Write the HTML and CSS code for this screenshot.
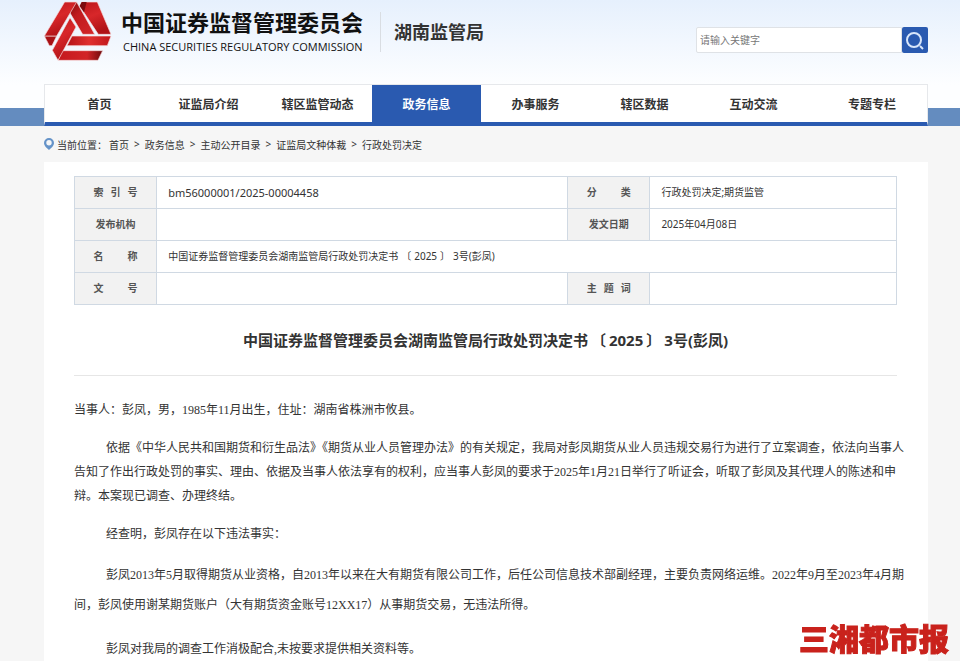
FILE: index.html
```html
<!DOCTYPE html>
<html lang="zh-CN">
<head>
<meta charset="utf-8">
<meta name="viewport" content="width=device-width, initial-scale=1">
<title>中国证券监督管理委员会湖南监管局行政处罚决定书</title>
<link rel="stylesheet" href="styles.css">
</head>
<body>
<header class="header">
  <div class="brand-row">
    <a class="brand" href="#">
      <svg class="logo" viewBox="0 0 216 192" aria-hidden="true">
        <defs>
          <linearGradient id="down" x1="0" y1="0" x2="0.4" y2="1">
            <stop offset="0" stop-color="#b81519"/><stop offset="0.5" stop-color="#d8272a"/><stop offset="1" stop-color="#b01216"/>
          </linearGradient>
          <linearGradient id="fold" x1="0" y1="0" x2="1" y2="1">
            <stop offset="0" stop-color="#6e0a0c"/><stop offset="0.4" stop-color="#c01a1d"/><stop offset="1" stop-color="#d4272a"/>
          </linearGradient>
          <linearGradient id="bar" x1="0" y1="0" x2="1" y2="0">
            <stop offset="0" stop-color="#b51418"/><stop offset="0.5" stop-color="#e0302f"/><stop offset="1" stop-color="#c0171b"/>
          </linearGradient>
          <linearGradient id="base" x1="0" y1="0" x2="1" y2="0">
            <stop offset="0" stop-color="#c5191d"/><stop offset="0.65" stop-color="#d22427"/><stop offset="1" stop-color="#6e0a0c"/>
          </linearGradient>
        </defs>
        <g stroke="#f6dedf" stroke-width="2" stroke-linejoin="round">
          <polygon points="68,6 104,6 158,103 122,103 68,12" fill="url(#fold)"/>
          <polygon points="7,108 44,108 30,137 22,137" fill="#a81115"/>
          <polygon points="68,6 104,6 44,108 7,108" fill="url(#down)"/>
          <polygon points="119,6 166,6 207,103 169,103 113,18" fill="url(#down)"/>
          <polygon points="113,18 119,6 134,6 126,37" fill="#7c0b0e" stroke="none"/>
          <polygon points="60,152 182,152 168,181 48,181" fill="url(#base)"/>
          <polygon points="84,53 102,81 48,181 31,151" fill="url(#down)"/>
          <polygon points="90,108 207,108 196,137 75,137" fill="url(#bar)"/>
        </g>
      </svg>
      <span class="brand-text">
        <span class="brand-cn">中国证券监督管理委员会</span>
        <span class="brand-en">CHINA SECURITIES REGULATORY COMMISSION</span>
      </span>
      <span class="bureau">湖南监管局</span>
    </a>
    <form class="search" role="search">
      <input class="search-input" type="text" placeholder="请输入关键字" aria-label="请输入关键字">
      <button class="search-button" type="button" aria-label="搜索">
        <svg viewBox="0 0 26 26" aria-hidden="true"><circle cx="12" cy="13" r="7"/><path d="M18 19l3 3"/></svg>
      </button>
    </form>
  </div>
  <nav class="nav">
    <a href="#">首页</a>
    <a href="#">证监局介绍</a>
    <a href="#">辖区监管动态</a>
    <a class="active" href="#">政务信息</a>
    <a href="#">办事服务</a>
    <a href="#">辖区数据</a>
    <a href="#">互动交流</a>
    <a href="#">专题专栏</a>
  </nav>
</header>
<main class="main">
  <div class="crumbs">
    <svg class="pin" viewBox="0 0 10 12" aria-hidden="true"><path fill-rule="evenodd" d="M5 0a5 5 0 0 1 5 5c0 3-3 5-5 7C3 10 0 8 0 5a5 5 0 0 1 5-5zM5 2a2.700 2.700 0 1 0 0 5.400A2.700 2.700 0 0 0 5 2z"/></svg>
    <span class="here">当前位置：</span>
    <a href="#">首页</a><span>&gt;</span>
    <a href="#">政务信息</a><span>&gt;</span>
    <a href="#">主动公开目录</a><span>&gt;</span>
    <a href="#">证监局文种体裁</a><span>&gt;</span>
    <a href="#">行政处罚决定</a>
  </div>
  <article class="panel">
    <table class="meta">
      <colgroup><col class="col-label"><col class="col-wide"><col class="col-label"><col class="col-rest"></colgroup>
      <tbody>
        <tr><th scope="row"><span class="spread">索引号</span></th><td class="code">bm56000001/2025-00004458</td><th scope="row"><span class="spread">分类</span></th><td>行政处罚决定;期货监管</td></tr>
        <tr><th scope="row">发布机构</th><td></td><th scope="row">发文日期</th><td>2025年04月08日</td></tr>
        <tr><th scope="row"><span class="spread">名称</span></th><td colspan="3">中国证券监督管理委员会湖南监管局行政处罚决定书<span class="bracket">〔</span>2025<span class="bracket">〕</span>3号(彭凤)</td></tr>
        <tr><th scope="row"><span class="spread">文号</span></th><td></td><th scope="row"><span class="spread">主题词</span></th><td></td></tr>
      </tbody>
    </table>
    <h1 class="title">中国证券监督管理委员会湖南监管局行政处罚决定书<span class="bracket">〔</span>2025<span class="bracket">〕</span>3号(彭凤)</h1>
    <div class="body">
      <p class="party">当事人：彭凤，男，1985年11月出生，住址：湖南省株洲市攸县。</p>
      <p>依据《中华人民共和国期货和衍生品法》《期货从业人员管理办法》的有关规定，我局对彭凤期货从业人员违规交易行为进行了立案调查，依法向当事人告知了作出行政处罚的事实、理由、依据及当事人依法享有的权利，应当事人彭凤的要求于2025年1月21日举行了听证会，听取了彭凤及其代理人的陈述和申辩。本案现已调查、办理终结。</p>
      <p>经查明，彭凤存在以下违法事实：</p>
      <p class="loose">彭凤2013年5月取得期货从业资格，自2013年以来在大有期货有限公司工作，后任公司信息技术部副经理，主要负责网络运维。2022年9月至2023年4月期间，彭凤使用谢某期货账户（大有期货资金账号12XX17）从事期货交易，无违法所得。</p>
      <p class="loose">彭凤对我局的调查工作消极配合,未按要求提供相关资料等。</p>
    </div>
  </article>
</main>
<div class="watermark">三湘都市报</div>
</body>
</html>
```
FILE: styles.css
```css
* { box-sizing: border-box; }

body {
  margin: 0;
  min-height: 100vh;
  background: #f6f6f6;
  color: #333;
  font-family: "Noto Sans", "Noto Sans CJK SC", sans-serif;
  font-size: 10px;
}

a { color: inherit; text-decoration: none; }

.header {
  padding: 0 32px 0 44px;
  background:
    linear-gradient(#648cbf, #648cbf) bottom / 100% 18px no-repeat,
    linear-gradient(#e6f0fd, #fdfeff 85px);
}

.brand-row {
  display: flex;
  justify-content: space-between;
  align-items: flex-start;
  height: 84px;
}

.brand { display: flex; align-items: flex-start; }

.logo { width: 72px; height: 64px; margin-left: -2px; }

.brand-text {
  display: flex;
  flex-direction: column;
  margin: 8px 17px 0 7px;
  color: #111;
}

.brand-cn { font-size: 22px; font-weight: 700; line-height: 28px; }

.brand-en {
  margin: 4px 0 0 2px;
  font-family: "Open Sans", sans-serif;
  font-size: 11px;
  line-height: 14px;
}

.bureau {
  margin-top: 12px;
  padding-left: 13px;
  border-left: 1px solid #d9dde2;
  font-size: 18px;
  font-weight: 700;
  line-height: 40px;
}

.search { display: flex; margin-top: 27px; }

.search-input {
  width: 206px;
  height: 26px;
  padding: 0 3px;
  border: 1px solid #dfe2e6;
  border-radius: 2px 0 0 2px;
  background: #fff;
  font: inherit;
}

.search-input::placeholder { color: #777; opacity: 1; }

.search-button {
  width: 26px;
  height: 26px;
  padding: 0;
  border: 0;
  border-radius: 2px;
  background: #2a5ab0;
}

.search-button svg {
  display: block;
  fill: none;
  stroke: #d9e6fa;
  stroke-width: 2;
}

.nav {
  display: grid;
  grid-template-columns: repeat(7, 109fr) 119fr;
  border: 1px solid #e6e8eb;
  border-bottom: 4px solid #2a5ab0;
  background: #fff;
}

.nav a {
  padding-top: 2px;
  font-size: 12px;
  font-weight: 700;
  line-height: 35px;
  text-align: center;
}

.nav a:last-child { padding-left: 9px; }

.nav .active { background: #2a5ab0; color: #fff; }

.main { padding: 0 32px 0 44px; }

.crumbs {
  display: flex;
  align-items: center;
  gap: 5px;
  height: 36px;
}

.pin { width: 10px; height: 12px; margin-right: -2px; fill: #6593c8; }

.here { margin-right: -3px; }

.panel {
  padding: 14px 31px 0 30px;
  background: #fff;
}

.meta {
  width: 100%;
  border-collapse: collapse;
  table-layout: fixed;
}

.col-label { width: 10%; }
.col-wide { width: 50%; }
.col-rest { width: 30%; }

.meta th,
.meta td {
  padding: 0 11px 1px;
  border: 1px solid #d0d9e3;
  text-align: left;
  line-height: 15px;
}

.meta tr { height: 32px; }

.meta th {
  padding: 0;
  background: #f2f2f2;
  color: #555;
  text-align: center;
}

.meta .code { font-size: 11px; }

.spread {
  display: inline-block;
  width: 44px;
  text-align-last: justify;
}

.bracket { padding: 0 3px; }

.title {
  margin: 0 0 22px;
  padding: 23px 0;
  border-bottom: 1px solid #e6e6e6;
  font-size: 15px;
  font-weight: 700;
  line-height: 24px;
  text-align: center;
}

.body {
  font-family: "Liberation Serif", "Noto Sans CJK SC", serif;
  font-size: 12px;
  line-height: 24px;
}

.body p { margin: 0 -9px 14px 0; text-indent: 32px; }

.body .party { text-indent: 0; }

.body .loose { line-height: 30px; }

.body p:last-child { margin-bottom: 0; }

.watermark {
  position: fixed;
  right: 11px;
  bottom: 4px;
  color: #c9221c;
  font-size: 30px;
  font-weight: 900;
  line-height: 36px;
  -webkit-text-stroke: 1px #c9221c;
}
```
